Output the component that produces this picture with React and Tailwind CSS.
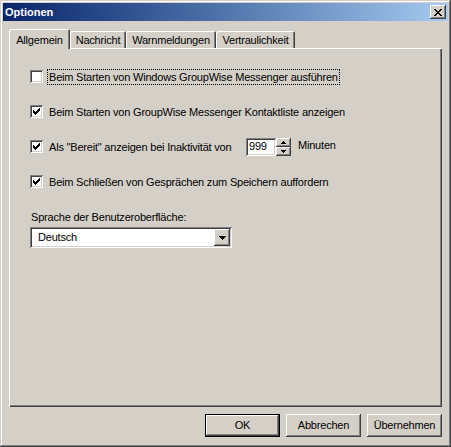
const raised =
  "shadow-[inset_-1px_-1px_#404040,inset_1px_1px_#ffffff,inset_-2px_-2px_#808080,inset_2px_2px_#d4d0c8]";
const sunken =
  "shadow-[inset_1px_1px_#808080,inset_-1px_-1px_#ffffff,inset_2px_2px_#404040,inset_-2px_-2px_#d4d0c8]";

function CheckMark() {
  return (
    <svg width="13" height="13" viewBox="0 0 13 13" shapeRendering="crispEdges">
      <path
        d="M3 5h1v3H3zM4 6h1v3H4zM5 7h1v3H5zM6 6h1v3H6zM7 5h1v3H7zM8 4h1v3H8zM9 3h1v3H9z"
        fill="#000"
      />
    </svg>
  );
}

function Checkbox({ checked, label, focused, labelClass = "" }) {
  return (
    <div className="flex items-center">
      <div className={`w-[13px] h-[13px] bg-white shrink-0 ${sunken}`}>
        {checked && <CheckMark />}
      </div>
      <span
        className={`ml-[4px] px-[1px] leading-[14px] border ${
          focused ? "border-dotted border-black" : "border-transparent"
        } ${labelClass}`}
      >
        {label}
      </span>
    </div>
  );
}

function Arrow({ dir = "down", w = 7 }) {
  const rows = [];
  const h = Math.ceil(w / 2);
  for (let i = 0; i < h; i++) {
    const y = dir === "down" ? i : h - 1 - i;
    rows.push(<rect key={i} x={i} y={y} width={w - i * 2} height="1" fill="#000" />);
  }
  return (
    <svg width={w} height={h} viewBox={`0 0 ${w} ${h}`} shapeRendering="crispEdges">
      {rows}
    </svg>
  );
}

function CloseGlyph() {
  return (
    <svg width="8" height="7" viewBox="0 0 8 7" shapeRendering="crispEdges">
      <path
        d="M0 0h2v1H0zM6 0h2v1H6zM1 1h2v1H1zM5 1h2v1H5zM2 2h4v1H2zM3 3h2v1H3zM2 4h4v1H2zM1 5h2v1H1zM5 5h2v1H5zM0 6h2v1H0zM6 6h2v1H6z"
        fill="#000"
      />
    </svg>
  );
}

function Tab({ label, active, width }) {
  if (active) {
    return (
      <div
        className={`relative z-10 h-[20px] mb-[-1px] bg-[#d4d0c8] rounded-t-[2px] flex items-start justify-center pt-[3px] shadow-[inset_1px_1px_#ffffff,inset_-1px_0_#404040,inset_-2px_0_#808080] ${width}`}
      >
        {label}
      </div>
    );
  }
  return (
    <div
      className={`h-[17px] bg-[#d4d0c8] rounded-t-[2px] flex items-start justify-center pt-[1px] shadow-[inset_1px_1px_#ffffff,inset_-1px_0_#404040,inset_-2px_0_#808080] ${width}`}
    >
      {label}
    </div>
  );
}

function Button({ children, isDefault }) {
  return (
    <button
      className={`w-[75px] h-[23px] bg-[#d4d0c8] flex items-center justify-center ${
        isDefault
          ? "shadow-[inset_0_0_0_1px_#000000,inset_-2px_-2px_#404040,inset_2px_2px_#ffffff,inset_-3px_-3px_#808080]"
          : raised
      }`}
    >
      {children}
    </button>
  );
}

export default function App() {
  return (
    <div className="w-[451px] h-[447px] bg-[#d4d0c8] p-[3px] flex flex-col text-[11px] text-black font-['Liberation_Sans',Arial,sans-serif] shadow-[inset_-1px_-1px_#404040,inset_1px_1px_#d4d0c8,inset_-2px_-2px_#808080,inset_2px_2px_#ffffff]">
      {/* title bar */}
      <div className="h-[18px] flex items-center justify-between pl-[2px] pr-[2px] bg-gradient-to-r from-[#0a246a] to-[#a6caf0]">
        <span className="font-bold text-white leading-[18px]">Optionen</span>
        <div className={`w-[16px] h-[14px] bg-[#d4d0c8] flex items-center justify-center ${raised}`}>
          <CloseGlyph />
        </div>
      </div>

      <div className="flex-1 flex flex-col px-[6px] pt-[8px] pb-[7px] tracking-[-0.2px]">
        {/* tabs */}
        <div className="h-[19px] flex items-end">
          <Tab label="Allgemein" active width="w-[61px]" />
          <Tab label="Nachricht" width="w-[56px]" />
          <Tab label="Warnmeldungen" width="w-[90px]" />
          <Tab label="Vertraulichkeit" width="w-[79px]" />
        </div>

        {/* panel */}
        <div className="flex-1 pl-[21px] pt-[11px] shadow-[inset_1px_1px_#ffffff,inset_-1px_-1px_#404040,inset_-2px_-2px_#808080]">
          <div className="h-[35px] flex items-center">
            <Checkbox label="Beim Starten von Windows GroupWise Messenger ausführen" focused />
          </div>
          <div className="h-[35px] flex items-center">
            <Checkbox checked label="Beim Starten von GroupWise Messenger Kontaktliste anzeigen" />
          </div>
          <div className="h-[35px] flex items-center">
            <Checkbox
              checked
              label='Als "Bereit" anzeigen bei Inaktivität von'
              labelClass="w-[195px]"
            />
            <div className={`ml-[4px] w-[30px] h-[18px] bg-white pl-[3px] flex items-center ${sunken}`}>
              999
            </div>
            <div className="w-[15px] h-[18px] flex flex-col">
              <div className={`h-[9px] bg-[#d4d0c8] flex items-center justify-center ${raised}`}>
                <Arrow dir="up" w={5} />
              </div>
              <div className={`h-[9px] bg-[#d4d0c8] flex items-center justify-center ${raised}`}>
                <Arrow dir="down" w={5} />
              </div>
            </div>
            <span className="ml-[7px] mt-[-2px]">Minuten</span>
          </div>
          <div className="h-[35px] flex items-center">
            <Checkbox checked label="Beim Schließen von Gesprächen zum Speichern auffordern" />
          </div>

          <div className="mt-[12px] pl-[1px] leading-[13px]">Sprache der Benutzeroberfläche:</div>
          <div className={`mt-[3px] w-[202px] h-[21px] bg-white flex items-center justify-between pl-[8px] pr-[2px] ${sunken}`}>
            <span>Deutsch</span>
            <div className={`w-[16px] h-[17px] bg-[#d4d0c8] flex items-center justify-center ${raised}`}>
              <Arrow dir="down" w={7} />
            </div>
          </div>
        </div>

        {/* buttons */}
        <div className="mt-[7px] flex justify-end gap-[6px]">
          <Button isDefault>OK</Button>
          <Button>Abbrechen</Button>
          <Button>Übernehmen</Button>
        </div>
      </div>
    </div>
  );
}
